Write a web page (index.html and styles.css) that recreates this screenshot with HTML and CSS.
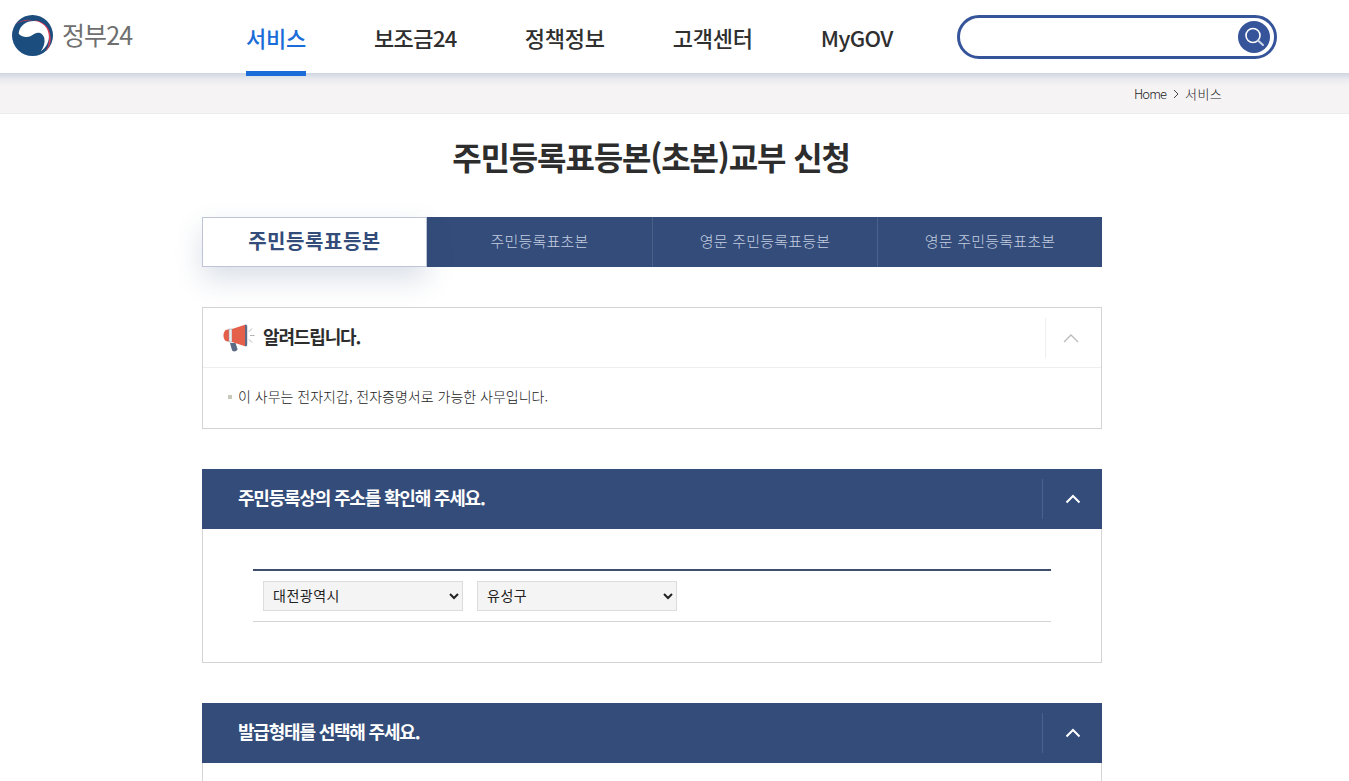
FILE: index.html
```html
<!DOCTYPE html>
<html lang="ko">
<head>
<meta charset="utf-8">
<title>주민등록표등본(초본)교부 신청</title>
<link rel="stylesheet" href="styles.css">
</head>
<body>
<header class="top">
  <a class="logo" href="#">
    <svg class="logo-mark" viewBox="0 0 40 40" width="41" height="41" aria-hidden="true">
      <circle cx="20" cy="20" r="20" fill="#1b4d7e"/>
      <path d="M3.500 9A20 20 0 0 1 33 35.200A17 17 0 0 0 37.500 21C37 11 29 5.200 20 5.200C13 5.200 7.500 6.500 3.500 9Z" fill="#dc3a55"/>
      <path d="M6.500 18C7.500 10 14 5.800 21 5.800C29.500 5.800 36 12.500 36 21C36 27.500 32.500 32.500 28 35.500C31 31.500 32.500 27 31.500 22.500C30.500 18 26 16 22.500 18C19 20 17 22 13 21.500C10 21 7.500 20 6.500 18Z" fill="#fff"/>
    </svg>
    <span class="logo-text">정부24</span>
  </a>
  <nav class="gnb">
    <a class="gnb-item is-active" href="#">서비스</a>
    <a class="gnb-item gnb-tight" href="#">보조금24</a>
    <a class="gnb-item" href="#">정책정보</a>
    <a class="gnb-item" href="#">고객센터</a>
    <a class="gnb-item gnb-tight" href="#">MyGOV</a>
  </nav>
  <form class="search">
    <input class="search-input" type="text" aria-label="검색">
    <button class="search-btn" type="button" aria-label="검색">
      <svg viewBox="0 0 32 32" width="32" height="32" aria-hidden="true">
        <circle cx="15" cy="14.500" r="7" fill="none" stroke="#fff" stroke-width="1.600"/>
        <path d="M20 19.500l5 4.500" stroke="#cfd8ea" stroke-width="2" stroke-linecap="round"/>
      </svg>
    </button>
  </form>
</header>

<div class="crumb">
  <div class="crumb-in">
    <span>Home</span>
    <svg class="crumb-sep" viewBox="0 0 6 10" width="6" height="10" aria-hidden="true"><path d="M1 1l4 4-4 4" fill="none" stroke="#444" stroke-width="1"/></svg>
    <span class="crumb-cur">서비스</span>
  </div>
</div>

<main class="wrap">
  <h1 class="title">주민등록표등본(초본)교부 신청</h1>

  <div class="tabs">
    <a class="tab is-on" href="#">주민등록표등본</a>
    <a class="tab" href="#">주민등록표초본</a>
    <a class="tab" href="#">영문 주민등록표등본</a>
    <a class="tab" href="#">영문 주민등록표초본</a>
  </div>

  <section class="notice">
    <div class="notice-head">
      <svg class="mega" viewBox="0 0 32 28" width="32" height="28" aria-hidden="true">
        <path d="M7 19l5.500 0 2 6c.5 2-4.500 3.500-5.500 1.300z" fill="#5b6b85"/>
        <path d="M4.500 5.500H7v12H4.500C2 17.500.5 14.500.5 11.500S2 5.500 4.500 5.500z" fill="#e5604a"/>
        <rect x="6" y="5" width="3" height="13" fill="#eeeeee" stroke="#8a93a3" stroke-width=".5"/>
        <path d="M9 5L22 .8v21.400L9 18z" fill="#e5604a"/>
        <path d="M22 .5c1.600 0 2.200.8 2.200 2v18c0 1.200-.6 2-2.200 2z" fill="#5b6b85"/>
        <path d="M26 7.500l3-3M27 11.500h4.500M26 15.500l3 3" stroke="#b4b4b4" stroke-width="1" fill="none"/>
      </svg>
      <h2 class="notice-title">알려드립니다.</h2>
      <button class="fold fold-light" type="button" aria-label="접기">
        <svg viewBox="0 0 16 10" width="16" height="10" aria-hidden="true"><path d="M1 9l7-7 7 7" fill="none" stroke="#bbb" stroke-width="1.300"/></svg>
      </button>
    </div>
    <ul class="notice-body">
      <li class="notice-li">이 사무는 전자지갑, 전자증명서로 가능한 사무입니다.</li>
    </ul>
  </section>

  <section class="panel">
    <div class="panel-head">
      <h2 class="panel-title">주민등록상의 주소를 확인해 주세요.</h2>
      <button class="fold" type="button" aria-label="접기">
        <svg viewBox="0 0 16 10" width="16" height="10" aria-hidden="true"><path d="M1.500 8.500L8 2l6.500 6.500" fill="none" stroke="#fff" stroke-width="2"/></svg>
      </button>
    </div>
    <div class="panel-body">
      <div class="addr">
        <select class="sel" aria-label="시도"><option>대전광역시</option></select>
        <select class="sel" aria-label="시군구"><option>유성구</option></select>
      </div>
    </div>
  </section>

  <section class="panel panel-last">
    <div class="panel-head">
      <h2 class="panel-title">발급형태를 선택해 주세요.</h2>
      <button class="fold" type="button" aria-label="접기">
        <svg viewBox="0 0 16 10" width="16" height="10" aria-hidden="true"><path d="M1.500 8.500L8 2l6.500 6.500" fill="none" stroke="#fff" stroke-width="2"/></svg>
      </button>
    </div>
    <div class="panel-body panel-body-open"></div>
  </section>
</main>
</body>
</html>
```

FILE: styles.css
```css
* { box-sizing: border-box; }
html, body { margin: 0; padding: 0; height: 781px; overflow: hidden; }
body {
  background: #fff;
  color: #333;
  font-family: "Noto Sans CJK KR", "Noto Sans", sans-serif;
}
a { color: inherit; text-decoration: none; }
h1, h2, ul { margin: 0; padding: 0; }
button { border: 0; background: none; padding: 0; font: inherit; }

.top {
  height: 73px;
  display: flex;
  align-items: flex-start;
  background: #fff;
}
.logo {
  display: flex;
  align-items: center;
  width: 246px;
  height: 73px;
  padding: 0 0 3px 12px;
}
.logo-mark { flex: none; margin-right: 9px; }
.logo-text { font-size: 25px; letter-spacing: -.9px; color: #6f6f6f; line-height: 1; margin-bottom: 2px; }

.gnb { display: flex; gap: 68px; height: 76px; width: 711px; position: relative; z-index: 2; }
.gnb-item {
  font-size: 22px;
  font-weight: 500;
  letter-spacing: -.25px;
  line-height: 74px;
  color: #2f2f2f;
  border-bottom: 5px solid transparent;
  height: 76px;
}
.gnb-tight { letter-spacing: -.6px; }
.gnb-item.is-active { color: #1a6cd8; border-bottom-color: #1a6cd8; }

.search {
  display: flex;
  align-items: center;
  width: 320px;
  height: 44px;
  margin-top: 15px;
  padding: 0 4px 0 16px;
  border: 3px solid #36549a;
  border-radius: 22px;
  background: #fff;
}
.search-input { flex: 1; min-width: 0; border: 0; outline: 0; height: 32px; background: none; }
.search-btn {
  width: 32px;
  height: 32px;
  border-radius: 50%;
  background: #36549a;
  display: flex;
}

.crumb {
  height: 41px;
  background: linear-gradient(#cfd5e1 0, #e9eaef 6px, #f5f3f4 13px);
  border-bottom: 1px solid #ececec;
}
.crumb-in {
  display: flex;
  align-items: center;
  gap: 6px;
  height: 40px;
  padding-left: 1134px;
  font-size: 13px;
  font-weight: 300;
  letter-spacing: -.9px;
  color: #222;
}
.crumb-sep { flex: none; margin: 2px 0 0 1px; }
.crumb-cur { letter-spacing: .4px; }

.wrap { width: 900px; margin-left: 202px; }
.title {
  height: 103px;
  padding: 18px 2px 0 0;
  text-align: center;
  font-size: 32px;
  line-height: 48px;
  font-weight: 700;
  letter-spacing: -1.150px;
  color: #2d2d2d;
}

.tabs { display: flex; height: 50px; background: #334c79; margin-bottom: 40px; }
.tab {
  flex: 0 0 225px;
  display: flex;
  align-items: center;
  justify-content: center;
  padding-bottom: 3px;
  font-size: 15px;
  letter-spacing: .2px;
  font-weight: 300;
  color: #c3cde0;
  border-left: 1px solid #4a6189;
}
.tab.is-on {
  background: #fff;
  color: #334c79;
  font-size: 20px;
  letter-spacing: .55px;
  font-weight: 700;
  border: 1px solid #bcc4d6;
  box-shadow: 0 12px 28px rgba(51, 76, 121, .18);
  position: relative;
}
.tab.is-on + .tab { border-left: 0; }

.notice { border: 1px solid #d4d4d4; height: 122px; margin-bottom: 40px; }
.notice-head {
  height: 60px;
  display: flex;
  align-items: center;
  padding-left: 20px;
  border-bottom: 1px solid #eee;
}
.mega { flex: none; margin-right: 8px; }
.notice-title { flex: 1; font-size: 18px; line-height: 26px; margin-bottom: 3px; font-weight: 700; letter-spacing: -1.150px; color: #2d2d2d; }
.fold {
  flex: none;
  width: 60px;
  height: 40px;
  display: flex;
  align-items: center;
  justify-content: center;
  border-left: 1px solid #4a6189;
}
.fold-light { width: 56px; padding-right: 6px; border-left-color: #eee; margin-top: 1px; }

.notice-body { list-style: none; padding: 18px 0 0 25px; }
.notice-li {
  position: relative;
  padding-left: 10px;
  font-size: 14px;
  line-height: 20px;
  font-weight: 300;
  letter-spacing: 0;
  color: #222;
}
.notice-li::before {
  content: "";
  position: absolute;
  left: 0;
  top: 9px;
  width: 4px;
  height: 4px;
  background: #c9c9bb;
}

.panel { margin-bottom: 40px; }
.panel-last { margin-bottom: 0; }
.panel-head {
  height: 60px;
  display: flex;
  align-items: center;
  padding-left: 36px;
  background: #334c79;
}
.panel-title {
  flex: 1;
  font-size: 18px;
  line-height: 26px;
  margin-bottom: 4px;
  font-weight: 700;
  letter-spacing: -1.200px;
  color: #fff;
}
.panel-body {
  height: 134px;
  padding: 40px 50px;
  border: 1px solid #d4d4d4;
  border-top: 0;
}
.panel-body-open { height: 18px; padding: 0; border-bottom: 0; }
.addr {
  display: flex;
  gap: 14px;
  align-items: center;
  height: 53px;
  padding-left: 10px;
  border-top: 2px solid #3f4f6b;
  border-bottom: 1px solid #d4d4d4;
}
.sel {
  width: 200px;
  height: 30px;
  padding: 0 5px 2px;
  border: 1px solid #dcdcdc;
  background: #f4f4f4;
  font-family: "Noto Sans CJK KR", sans-serif;
  font-size: 14px;
  letter-spacing: .5px;
  font-weight: 400;
  color: #222;
  border-radius: 0;
}
```
